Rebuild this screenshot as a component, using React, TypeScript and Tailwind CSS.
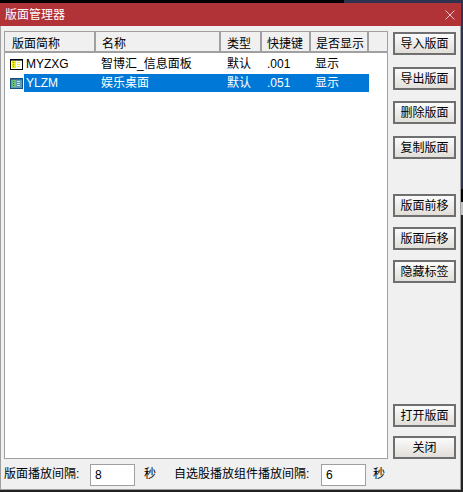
const font = "[font-family:'Liberation_Sans','Noto_Sans_CJK_SC',sans-serif]"

const columns = [
  { title: "版面简称", cell: "w-[91px] pl-[7px]" },
  { title: "名称", cell: "w-[125px] pl-[6px]" },
  { title: "类型", cell: "w-[41px] pl-[6px]" },
  { title: "快捷键", cell: "w-[49px] pl-[5px]" },
  { title: "是否显示", cell: "w-[58px] pl-[5px]" },
]

const rows = [
  { id: "MYZXG", name: "智博汇_信息面板", type: "默认", key: ".001", show: "显示", selected: false },
  { id: "YLZM", name: "娱乐桌面", type: "默认", key: ".051", show: "显示", selected: true },
]

function RowIcon({ selected }: { selected: boolean }) {
  const edge = selected ? "#17507c" : "#000000"
  const fill = selected ? "#5f9bb5" : "#ffffff"
  const mark = selected ? "#6fc07a" : "#f2ee22"
  const dot = selected ? "#2f7a55" : "#8a8420"
  const line = selected ? "#c4dbe4" : "#f2ee22"
  return (
    <svg width="13" height="11" viewBox="0 0 13 11" className="shrink-0">
      <rect x="0.5" y="0.5" width="12" height="10" fill={fill} stroke={edge} />
      <rect x="1" y="1" width="11" height="1" fill={edge} opacity="0.6" />
      <rect x="2" y="2" width="4" height="7" fill={mark} />
      <rect x="3" y="3" width="1" height="1" fill={dot} />
      <rect x="3" y="5" width="1" height="1" fill={dot} />
      <rect x="3" y="7" width="1" height="1" fill={dot} />
      <rect x="7" y="3" width="3" height="1" fill={line} />
      <rect x="7" y="5" width="3" height="1" fill={line} />
      <rect x="7" y="7" width="3" height="1" fill={line} />
    </svg>
  )
}

function ActionButton({ label, className = "" }: { label: string; className?: string }) {
  return (
    <button
      className={`h-[23px] w-[63px] shrink-0 border-2 border-[#6f6f6f] bg-linear-to-b from-[#fbfbfb] to-[#e2dfda] pt-px text-[12px] leading-[18px] text-black ${className}`}
    >
      {label}
    </button>
  )
}

export default function App() {
  return (
    <div className={`flex h-[492px] w-[463px] flex-col bg-[#222222] text-[12px] text-black ${font}`}>
      <div className="flex h-[3px] shrink-0">
        <div className="w-[344px] bg-black" />
        <div className="flex-1 bg-[#2e3450]" />
      </div>

      <div className="flex h-[487px] shrink-0">
        <div className="flex w-[461px] shrink-0 flex-col">
          <div className="flex h-[23px] shrink-0 items-center justify-between bg-[#b13237] pl-[5px] pr-[6px] text-white">
            <span className="leading-[20px]">版面管理器</span>
            <svg width="10" height="10" viewBox="0 0 10 10" stroke="#e8c8c8" strokeWidth="1" fill="none">
              <path d="M0.5 0.5 L9.5 9.5 M9.5 0.5 L0.5 9.5" />
            </svg>
          </div>

          <div className="flex h-[464px] shrink-0 flex-col border-x border-b border-[#a0a0a0] bg-[#f0f0f0]">
            <div className="flex h-[433px] shrink-0 pl-[3px] pt-[5px]">
              <div className="h-[428px] w-[384px] border border-[#a0a0a0] bg-white">
                <div className="flex h-[21px] border-b-2 border-[#a0a0a0] bg-[#f0f0f0] pt-[3px] leading-[18px]">
                  {columns.map((col) => (
                    <div key={col.title} className={`${col.cell} -mt-[3px] border-r-2 border-[#a0a0a0] pt-[3px]`}>
                      {col.title}
                    </div>
                  ))}
                </div>

                <div className="mt-[2px] flex flex-col gap-px">
                  {rows.map((row) => (
                    <div key={row.id} className="flex h-[18px] items-center pl-[5px]">
                      <RowIcon selected={row.selected} />
                      <div
                        className={`ml-[1px] flex h-[18px] items-center leading-[18px] ${
                          row.selected ? "bg-[#0078d7] text-white" : ""
                        }`}
                      >
                        <span className="w-[77px] pl-[2px]">{row.id}</span>
                        <span className="w-[126px]">{row.name}</span>
                        <span className="w-[40px]">{row.type}</span>
                        <span className="w-[48px]">{row.key}</span>
                        <span className="w-[54px]">{row.show}</span>
                      </div>
                    </div>
                  ))}
                </div>
              </div>

              <div className="ml-[5px] flex h-[428px] flex-col">
                <ActionButton label="导入版面" className="mt-[1px]" />
                <ActionButton label="导出版面" className="mt-[12px]" />
                <ActionButton label="删除版面" className="mt-[11px]" />
                <ActionButton label="复制版面" className="mt-[12px]" />
                <ActionButton label="版面前移" className="mt-[35px]" />
                <ActionButton label="版面后移" className="mt-[10px]" />
                <ActionButton label="隐藏标签" className="mt-[10px]" />
                <ActionButton label="打开版面" className="mt-[121px]" />
                <ActionButton label="关闭" className="mt-[9px]" />
              </div>
            </div>

            <div className="mt-[5px] flex h-[22px] items-center pl-[3px]">
              <span className="w-[86px] pb-[2px]">版面播放间隔:</span>
              <div className="flex h-[22px] w-[45px] items-center border border-[#a0a0a0] bg-white pl-[4px]">8</div>
              <span className="ml-[9px] w-[30px] pb-[2px]">秒</span>
              <span className="w-[147px] pb-[2px]">自选股播放组件播放间隔:</span>
              <div className="flex h-[22px] w-[45px] items-center border border-[#a0a0a0] bg-white pl-[4px]">6</div>
              <span className="ml-[7px] pb-[2px]">秒</span>
            </div>
          </div>
        </div>

        <div className="flex w-[2px] shrink-0 flex-col">
          <div className="h-[186px] bg-[#2e3450]" />
          <div className="h-[13px] bg-black" />
          <div className="h-[13px] bg-[#c4c4c4]" />
          <div className="flex-1 bg-[#222222]" />
        </div>
      </div>

      <div className="h-[2px] shrink-0 bg-[#222222]" />
    </div>
  )
}
